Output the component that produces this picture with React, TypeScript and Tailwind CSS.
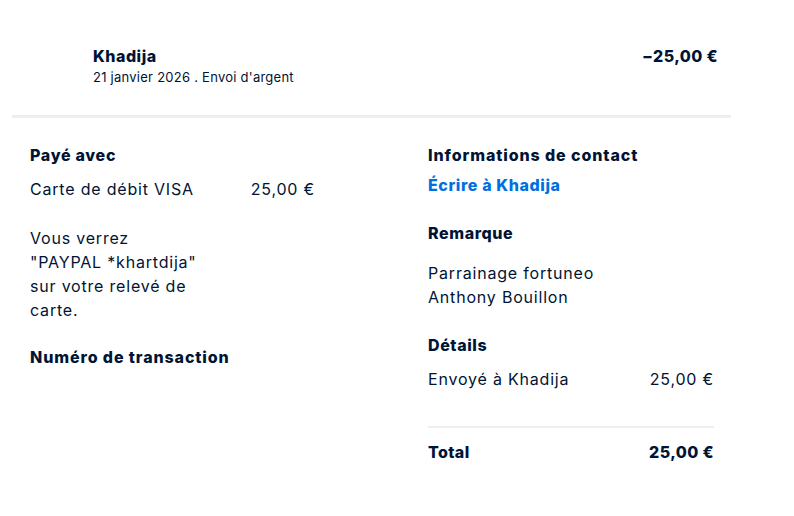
export default function App() {
  return (
    <div
      className="min-h-[516px] w-[794px] bg-white text-[#001435]"
      style={{ fontFamily: 'Inter, "Liberation Sans", sans-serif' }}
    >
      <div className="ml-[12px] w-[719px] pt-[44px]">
        <div className="flex items-start justify-between border-b-[3px] border-[#efeee9] pb-[29px] pl-[81px] pr-[13px]">
          <div>
            <div className="text-[16px] font-extrabold leading-[24px] tracking-[0.5px]">Khadija</div>
            <div className="text-[13px] leading-[18px] tracking-[0.25px]">21 janvier 2026 . Envoi d'argent</div>
          </div>
          <div className="text-[16px] font-extrabold leading-[24px] tracking-[0.4px]">−25,00 €</div>
        </div>
      </div>

      <div className="flex pt-[25px] text-[16px] leading-[24px] tracking-[0.8px]">
        <div className="ml-[30px] w-[285px]">
          <div className="font-extrabold tracking-[0.7px]">Payé avec</div>
          <div className="mt-[10px] flex justify-between">
            <span>Carte de débit VISA</span>
            <span>25,00 €</span>
          </div>
          <p className="mt-[25px] w-[172px]">
            Vous verrez "PAYPAL *khartdija" sur votre relevé de carte.
          </p>
          <div className="mt-[23px] font-extrabold tracking-[0.9px]">Numéro de transaction</div>
        </div>

        <div className="ml-[113px] w-[286px]">
          <div className="font-extrabold tracking-[0.9px]">Informations de contact</div>
          <a className="mt-[6px] block font-extrabold tracking-[0.6px] text-[#0070e0]">Écrire à Khadija</a>
          <div className="mt-[24px] font-extrabold tracking-[0.6px]">Remarque</div>
          <p className="mt-[16px]">
            Parrainage fortuneo
            <br />
            Anthony Bouillon
          </p>
          <div className="mt-[24px] font-extrabold tracking-[0.6px]">Détails</div>
          <div className="mt-[10px] flex justify-between">
            <span>Envoyé à Khadija</span>
            <span>25,00 €</span>
          </div>
          <div className="mt-[35px] h-[2px] bg-[#efeee9]" />
          <div className="mt-[12px] flex justify-between font-extrabold tracking-[0.4px]">
            <span>Total</span>
            <span>25,00 €</span>
          </div>
        </div>
      </div>
    </div>
  );
}
